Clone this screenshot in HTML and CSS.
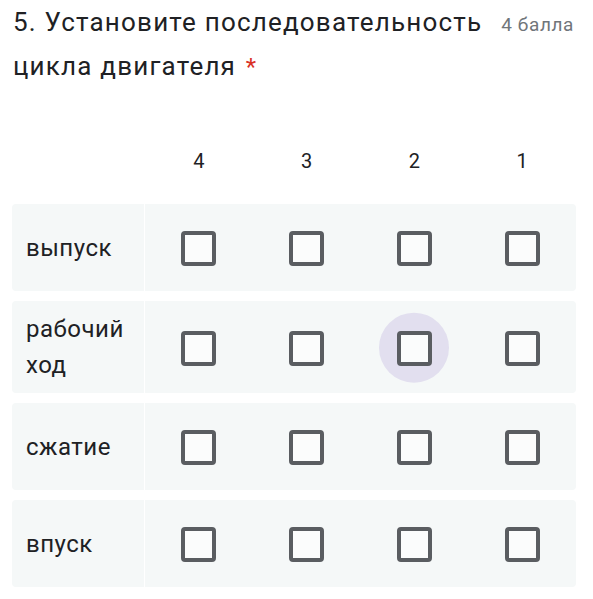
FILE: index.html
```html
<!DOCTYPE html>
<html lang="ru">
<head>
<meta charset="utf-8">
<link rel="stylesheet" href="styles.css">
</head>
<body>
<div class="question">
  <div class="q-head">
    <div class="q-title">5. Установите последовательность цикла двигателя <span class="req">*</span></div>
    <div class="q-points">4 балла</div>
  </div>
  <div class="grid">
    <div class="cols">
      <div class="corner"></div>
      <div class="col-labels">
        <span>4</span><span>3</span><span>2</span><span>1</span>
      </div>
    </div>
    <div class="row">
      <div class="label">выпуск</div>
      <div class="opts">
        <div class="cell"><span class="box"></span></div>
        <div class="cell"><span class="box"></span></div>
        <div class="cell"><span class="box"></span></div>
        <div class="cell"><span class="box"></span></div>
      </div>
    </div>
    <div class="row">
      <div class="label">рабочий<br>ход</div>
      <div class="opts">
        <div class="cell"><span class="box"></span></div>
        <div class="cell"><span class="box"></span></div>
        <div class="cell"><span class="halo"></span><span class="box"></span></div>
        <div class="cell"><span class="box"></span></div>
      </div>
    </div>
    <div class="row">
      <div class="label">сжатие</div>
      <div class="opts">
        <div class="cell"><span class="box"></span></div>
        <div class="cell"><span class="box"></span></div>
        <div class="cell"><span class="box"></span></div>
        <div class="cell"><span class="box"></span></div>
      </div>
    </div>
    <div class="row">
      <div class="label">впуск</div>
      <div class="opts">
        <div class="cell"><span class="box"></span></div>
        <div class="cell"><span class="box"></span></div>
        <div class="cell"><span class="box"></span></div>
        <div class="cell"><span class="box"></span></div>
      </div>
    </div>
  </div>
</div>
</body>
</html>
```

FILE: styles.css
```css
html, body {
  margin: 0;
  padding: 0;
  background: #ffffff;
}
body {
  font-family: Roboto, "Liberation Sans", Arial, sans-serif;
  color: #202124;
}
.question {
  padding: 0 17px 0 13px;
}
.q-head {
  display: flex;
  align-items: baseline;
  justify-content: space-between;
}
.q-title {
  font-size: 26px;
  line-height: 44px;
  width: 482px;
  letter-spacing: 1.2px;
}
.req {
  color: #d93025;
  font-size: 24px;
  margin-left: 2px;
}
.q-points {
  font-size: 19px;
  letter-spacing: 0.6px;
  color: #70757a;
  white-space: nowrap;
  margin-right: 2px;
}
.grid {
  margin-top: 60px;
  display: flex;
  flex-direction: column;
  gap: 10px;
  margin-left: -1px;
}
.cols {
  display: flex;
  margin-bottom: 21px;
}
.corner {
  width: 133px;
}
.col-labels {
  flex: 1;
  display: grid;
  grid-template-columns: repeat(4, 1fr);
  font-size: 20px;
  line-height: 24px;
  text-align: center;
}
.row {
  display: flex;
  min-height: 87px;
  border-radius: 4px;
  overflow: hidden;
}
.label {
  width: 118px;
  padding: 10px 0 10px 14px;
  background: #f5f8f8;
  font-size: 24px;
  letter-spacing: 0.5px;
  line-height: 36px;
  display: flex;
  align-items: center;
  margin-right: 1px;
}
.opts {
  flex: 1;
  background: #f5f8f8;
  display: grid;
  grid-template-columns: repeat(4, 1fr);
  align-items: center;
}
.cell {
  position: relative;
  display: flex;
  justify-content: center;
  align-items: center;
  height: 100%;
}
.box {
  position: relative;
  width: 27px;
  height: 27px;
  border: 4px solid #5a5d61;
  border-radius: 4px;
  background: #fbfcfc;
  margin-top: 2px;
}
.halo {
  position: absolute;
  width: 70px;
  height: 70px;
  border-radius: 50%;
  background: #e2dfef;
  left: 50%;
  top: 50%;
  transform: translate(-50%, -49%);
}
```
